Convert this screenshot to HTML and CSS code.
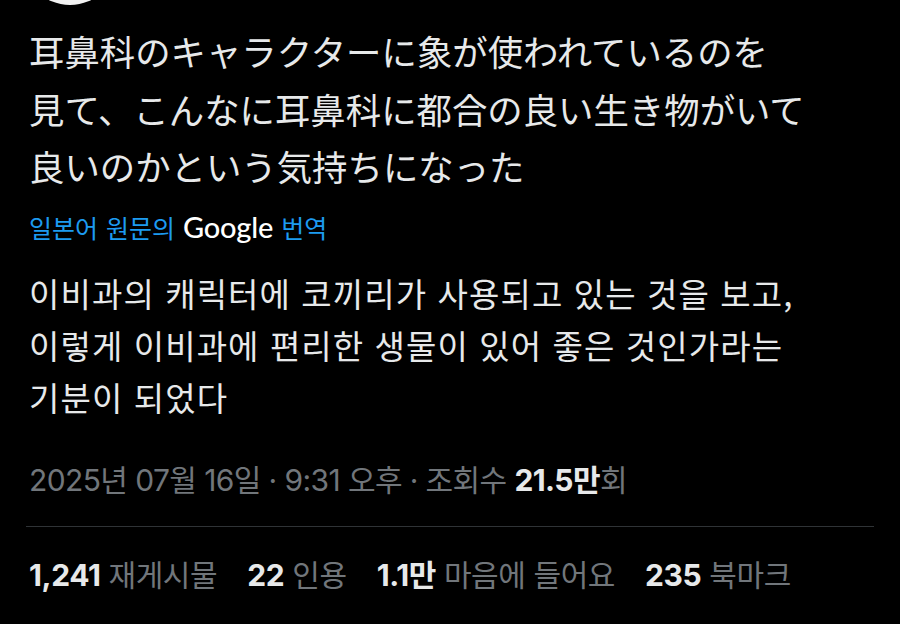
FILE: index.html
```html
<!DOCTYPE html>
<html lang="ko">
<head>
<meta charset="utf-8">
<link rel="stylesheet" href="styles.css">
</head>
<body>
<div class="tweet">
  <div class="head"><div class="avatar"></div></div>
  <p class="orig" lang="ja">耳鼻科のキャラクターに象が使われているのを<br>見て、こんなに耳鼻科に都合の良い生き物がいて<br>良いのかという気持ちになった</p>
  <div class="label">일본어 원문의 <span class="google">Google</span> 번역</div>
  <p class="trans">이비과의 캐릭터에 코끼리가 사용되고 있는 것을 보고,<br>이렇게 이비과에 편리한 생물이 있어 좋은 것인가라는<br>기분이 되었다</p>
  <div class="meta">2025년 07월 16일 · 9:31 오후 · 조회수 <b>21.5만</b>회</div>
  <div class="rule"></div>
  <div class="stats">
    <span class="stat"><b>1,241</b> 재게시물</span>
    <span class="stat"><b>22</b> 인용</span>
    <span class="stat"><b>1.1만</b> 마음에 들어요</span>
    <span class="stat"><b>235</b> 북마크</span>
  </div>
</div>
</body>
</html>
```

FILE: styles.css
```css
html, body {
  margin: 0;
  padding: 0;
  background: #000;
}
body {
  width: 900px;
  height: 624px;
  overflow: hidden;
  font-family: "Noto Sans CJK KR", "Noto Sans CJK JP", sans-serif;
  color: #e7e9ea;
}
.tweet {
  display: flow-root;
  padding: 0 26px 0 29px;
}
.head {
  height: 0;
  position: relative;
}
.avatar {
  position: absolute;
  left: -7px;
  top: -91px;
  width: 96px;
  height: 96px;
  border-radius: 50%;
  background: #f2f2f2;
}
.orig {
  margin: 22px 0 0;
  font-family: "Noto Sans CJK JP", sans-serif;
  font-size: 35.4px;
  line-height: 57.5px;
  color: #e7e9ea;
}
.label {
  margin-top: 17px;
  font-size: 25px;
  word-spacing: 1px;
  line-height: 30px;
  color: #1d9bf0;
}
.google {
  font-family: "Lato", sans-serif;
  font-weight: 500;
  color: #fff;
  font-size: 29px;
  letter-spacing: -0.2px;
}
.trans {
  margin: 25px 0 0;
  font-size: 33px;
  letter-spacing: 1.1px;
  line-height: 52px;
  color: #e7e9ea;
}
.meta {
  margin-top: 39px;
  font-family: "Inter", "Noto Sans CJK KR", sans-serif;
  font-size: 30px;
  letter-spacing: -0.6px;
  line-height: 36px;
  color: #71767b;
}
.meta b, .stats b {
  font-family: "Inter", "Noto Sans CJK KR", sans-serif;
  font-weight: 700;
  color: #e7e9ea;
}
.rule {
  margin-top: 28px;
  height: 1px;
  background: #2f3336;
  margin-left: -3px;
}
.stats {
  margin-top: 28px;
  display: flex;
  gap: 30px;
  font-size: 30px;
  letter-spacing: -0.4px;
  line-height: 36px;
  color: #71767b;
}
```
